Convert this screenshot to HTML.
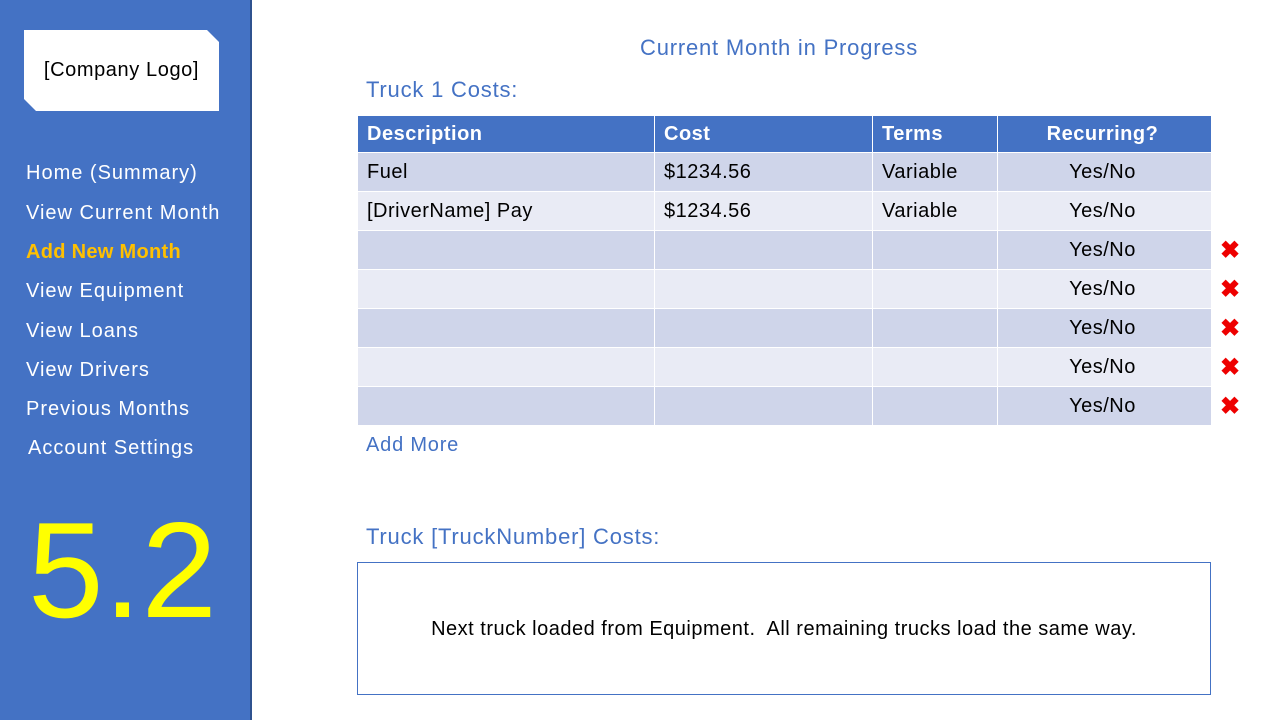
<!DOCTYPE html>
<html><head><style>
body{margin:0;width:1280px;height:720px;background:#fff;position:relative;overflow:hidden;font-family:"Liberation Sans",sans-serif}
.side{position:absolute;left:0;top:0;width:250px;height:720px;background:#4472c4;border-right:2px solid #2f528f}
.logo{position:absolute;left:24px;top:30px;width:195px;height:81px;background:#fff;clip-path:polygon(0 0,183px 0,195px 12px,195px 81px,12px 81px,0 69px);font-size:20px;letter-spacing:0.6px;text-align:center;line-height:81px;color:#000}
.nav{position:absolute;left:26px;color:#fff;font-size:20px;letter-spacing:1px}
.t{position:absolute;color:#4472c4;font-size:22px;letter-spacing:0.8px}
table{position:absolute;left:357px;top:115px;border-collapse:collapse;font-size:20px;letter-spacing:0.5px}
td,th{height:38px;padding:0 9px;border:1px solid #fff;text-align:left;font-weight:normal}
th{background:#4472c4;color:#fff;font-weight:bold;height:36px}
tr:nth-child(even) td{background:#cfd5ea}
tr:nth-child(odd) td{background:#e9ebf5}
.c{text-align:center;padding-right:13px}
.x{position:absolute;left:1220px;color:#e00;font-size:24px;font-weight:bold}
</style></head><body>
<div class="side">
<div class="logo">[Company Logo]</div>
<div class="nav" style="top:162px">Home (Summary)</div>
<div class="nav" style="top:202px">View Current Month</div>
<div class="nav" style="top:241px;color:#ffc000;font-weight:bold;letter-spacing:0.3px">Add New Month</div>
<div class="nav" style="top:280px">View Equipment</div>
<div class="nav" style="top:320px">View Loans</div>
<div class="nav" style="top:359px">View Drivers</div>
<div class="nav" style="top:398px">Previous Months</div>
<div class="nav" style="top:437px;left:28px">Account Settings</div>
<div style="position:absolute;left:28px;top:500px;font-size:136px;color:#ffff00;line-height:140px">5.2</div>
</div>
<div class="t" style="left:640px;top:35px">Current Month in Progress</div>
<div class="t" style="left:366px;top:77px">Truck 1 Costs:</div>
<table>
<tr><th style="width:278px">Description</th><th style="width:199px">Cost</th><th style="width:106px">Terms</th><th class="c" style="width:191px;text-align:center">Recurring?</th></tr>
<tr><td>Fuel</td><td>$1234.56</td><td>Variable</td><td class="c">Yes/No</td></tr>
<tr><td>[DriverName] Pay</td><td>$1234.56</td><td>Variable</td><td class="c">Yes/No</td></tr>
<tr><td></td><td></td><td></td><td class="c">Yes/No</td></tr>
<tr><td></td><td></td><td></td><td class="c">Yes/No</td></tr>
<tr><td></td><td></td><td></td><td class="c">Yes/No</td></tr>
<tr><td></td><td></td><td></td><td class="c">Yes/No</td></tr>
<tr><td></td><td></td><td></td><td class="c">Yes/No</td></tr>
</table>
<div class="x" style="top:236px">✖</div>
<div class="x" style="top:275px">✖</div>
<div class="x" style="top:314px">✖</div>
<div class="x" style="top:353px">✖</div>
<div class="x" style="top:392px">✖</div>
<div class="t" style="left:366px;top:434px;font-size:20px">Add More</div>
<div class="t" style="left:366px;top:524px">Truck [TruckNumber] Costs:</div>
<div style="position:absolute;left:357px;top:562px;width:852px;height:131px;border:1px solid #4472c4;text-align:center;line-height:133px;font-size:20px;letter-spacing:0.5px;color:#000">Next truck loaded from Equipment.&nbsp; All remaining trucks load the same way.</div>
</body></html>
